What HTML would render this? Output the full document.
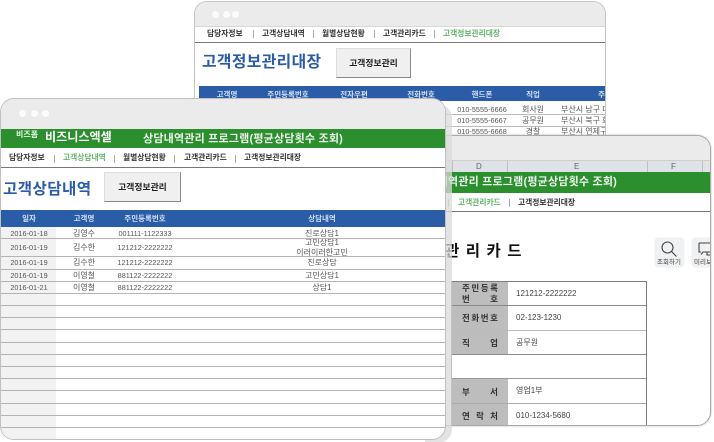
<!DOCTYPE html>
<html lang="ko"><head><meta charset="utf-8"><style>
html,body{margin:0;padding:0;background:#fff}
#p{position:relative;width:714px;height:442px;overflow:hidden;font-family:"Liberation Sans","Noto Sans CJK KR",sans-serif;filter:blur(.3px)}
.a,.t{position:absolute;white-space:nowrap}
.t{transform:translateX(-50%);line-height:12px}
.win{position:absolute;background:#fff;overflow:hidden;box-sizing:border-box;border:1px solid #c4c4c4}
.bar{position:absolute;left:0;right:0;top:0;background:#ebebeb}
.dot{position:absolute;width:7px;height:7px;border-radius:50%;background:#fbfbfb}
.g{background:#2b8f2e}
.n{font-size:7.75px;font-weight:bold;color:#333;line-height:12px}
.s{position:absolute;width:1px;height:8px;background:#aaa}
.lg{color:#62b56a}
.btn{position:absolute;background:#f0f0f0;border-right:1px solid #888;border-bottom:1px solid #888;border-top:1px solid #ddd;border-left:1px solid #ddd;box-sizing:border-box;font-size:8.8px;font-weight:bold;color:#222;text-align:center}
.h{color:#cfe0f5;font-size:7.5px;font-weight:bold}
.d{color:#555;font-size:8px}
.e{font-size:7.3px}
.l{position:absolute;left:0;right:0;height:1px;background:#b4b4b4}
.k{position:absolute;left:0;width:56px;background:#bdbdbd;color:#333;font-size:8.5px;font-weight:bold;box-sizing:border-box;padding:0 10px;display:flex;justify-content:space-between;align-items:center}
.k2{display:block;padding:1px 0 0;line-height:11px}
.k2 div{display:flex;justify-content:space-between;padding:0 10px}
.v{position:absolute;left:64px;color:#444;font-size:8px;line-height:23px}
.m{position:absolute;left:0;right:0;height:1px;background:#8a8a8a}
.c{position:absolute;top:0;width:1px;height:11px;background:#c0c0c0}
</style></head><body><div id="p">

<!-- back window -->
<div class="win" style="left:194px;top:1px;width:412px;height:150px;border-radius:13px 13px 0 0">
 <div class="bar" style="height:24px"></div>
 <div class="dot" style="left:17px;top:9px"></div><div class="dot" style="left:28px;top:9px"></div><div class="dot" style="left:37px;top:9px"></div>
 <div class="a" style="left:0;right:0;top:24px;height:1px;background:#d8d8d8"></div>
 <div class="a" style="left:0;right:0;top:40px;height:1px;background:#777"></div>
 <div class="a n" style="left:12px;top:26px">담당자정보</div><div class="s" style="left:58px;top:28px"></div>
 <div class="a n" style="left:67px;top:26px">고객상담내역</div><div class="s" style="left:118px;top:28px"></div>
 <div class="a n" style="left:127px;top:26px">월별상담현황</div><div class="s" style="left:179px;top:28px"></div>
 <div class="a n" style="left:188px;top:26px">고객관리카드</div><div class="s" style="left:239px;top:28px"></div>
 <div class="a n lg" style="left:248px;top:26px">고객정보관리대장</div>
 <div class="a" style="left:7px;top:50px;font-size:15.8px;font-weight:bold;color:#2b5ca8;line-height:22px;letter-spacing:.4px">고객정보관리대장</div>
 <div class="btn" style="left:141px;top:46px;width:75px;height:30px;line-height:28px">고객정보관리</div>
 <div class="a" style="left:4px;right:0;top:84px;height:15px;background:#2b5ca8"></div>
 <div class="t h" style="left:32px;top:87px">고객명</div><div class="t h" style="left:93px;top:87px">주민등록번호</div>
 <div class="t h" style="left:159px;top:87px">전자우편</div><div class="t h" style="left:226px;top:87px">전화번호</div>
 <div class="t h" style="left:287px;top:87px">핸드폰</div><div class="t h" style="left:338px;top:87px">직업</div><div class="a h" style="left:403px;top:87px;line-height:12px">주</div>
 <div class="a" style="left:4px;right:0;top:112px;height:1px;background:#bbb"></div><div class="a" style="left:4px;right:0;top:124px;height:1px;background:#bbb"></div>
 <div class="t d e" style="left:287px;top:102px">010-5555-6666</div><div class="t d" style="left:338px;top:102px">회사원</div><div class="a d" style="left:366px;top:102px;line-height:12px">부산시 남구 대</div>
 <div class="t d e" style="left:287px;top:113px">010-5555-6667</div><div class="t d" style="left:338px;top:113px">공무원</div><div class="a d" style="left:366px;top:113px;line-height:12px">부산시 북구 화</div>
 <div class="t d e" style="left:287px;top:124px">010-5555-6668</div><div class="t d" style="left:338px;top:124px">경찰</div><div class="a d" style="left:366px;top:124px;line-height:12px">부산시 연제구</div>
</div>

<!-- right window -->
<div class="win" style="left:400px;top:135px;width:311px;height:291px;border-radius:0 14px 14px 0;border-color:#aaa;box-shadow:0 0 2px #bbb">
 <div class="bar" style="height:24px"></div>
 <div class="a" style="left:0;right:0;top:24px;height:12px;background:#dfe2e7;border-top:1px solid #cfcfcf;box-sizing:border-box;color:#666;font-size:8px;line-height:11px">
  <span class="a" style="left:75px">D</span><span class="a" style="left:173px">E</span><span class="a" style="left:270px">F</span>
  <span class="c" style="left:51px"></span><span class="c" style="left:106px"></span><span class="c" style="left:246px"></span><span class="c" style="left:301px"></span>
 </div>
 <div class="a g" style="left:0;right:0;top:36px;height:21px"></div>
 <div class="a" style="left:16px;top:36px;color:#eef6ee;font-size:11px;font-weight:bold;line-height:21px;letter-spacing:.2px">상담내역관리 프로그램(평균상담횟수 조회)</div>
 <div class="a" style="left:0;right:0;top:75px;height:1px;background:#777"></div>
 <div class="s" style="left:47px;top:63px"></div>
 <div class="a n lg" style="left:57px;top:61px">고객관리카드</div><div class="s" style="left:108px;top:63px"></div>
 <div class="a n" style="left:117px;top:61px">고객정보관리대장</div>
 <div class="a" style="left:44px;top:105px;color:#111;font-size:15.5px;font-weight:bold;line-height:22px;letter-spacing:6.5px">관리카드</div>
 <div class="a" style="left:254px;top:102px;width:29px;height:29px;background:#f0f1f2;border-radius:4px;box-shadow:0 0 1px #ccc">
  <svg class="a" style="left:5px;top:2px" width="18" height="18" viewBox="0 0 18 18" fill="none" stroke="#444" stroke-width="1.1"><circle cx="7.5" cy="7.5" r="5.5"/><path d="M11.5 11.5l5 5"/></svg>
  <div class="t" style="left:14px;top:20px;font-size:6.5px;color:#444;line-height:10px">조회하기</div>
 </div>
 <div class="a" style="left:291px;top:102px;width:29px;height:29px;background:#f0f1f2;border-radius:4px;box-shadow:0 0 1px #ccc">
  <svg class="a" style="left:6px;top:4px" width="18" height="14" viewBox="0 0 18 14" fill="none" stroke="#444" stroke-width="1.1"><path d="M1 1h14v9H5l-2 2.5M1 1v9h2M9 10v3h4"/></svg>
  <div class="a" style="left:2px;top:20px;font-size:6.5px;color:#444;line-height:10px">미리보기</div>
 </div>
 <div class="a" style="left:50px;top:145px;width:196px;height:145px;border:1px solid #7d7d7d;box-sizing:border-box;border-bottom:none">
  <div class="k k2" style="top:0;height:24px"><div><span>주</span><span>민</span><span>등</span><span>록</span></div><div><span>번</span><span>호</span></div></div>
  <div class="k" style="top:24px;height:24px"><span>전</span><span>화</span><span>번</span><span>호</span></div>
  <div class="k" style="top:49px;height:24px"><span>직</span><span>업</span></div>
  <div class="k" style="top:97px;height:25px"><span>부</span><span>서</span></div>
  <div class="k" style="top:122px;height:23px"><span>연</span><span>락</span><span>처</span></div>
  <div class="v" style="top:0">121212-2222222</div>
  <div class="v" style="top:24px">02-123-1230</div>
  <div class="v" style="top:49px">공무원</div>
  <div class="v" style="top:97px">영업1부</div>
  <div class="v" style="top:122px">010-1234-5680</div>
  <div class="m" style="top:23px"></div><div class="m" style="top:48px;background:#bbb"></div><div class="m" style="top:72px"></div><div class="m" style="top:96px;background:#999"></div><div class="m" style="top:121px;background:#aaa"></div>
 </div>
</div>

<!-- left window shadow -->
<div class="a" style="left:425px;top:104px;width:27px;height:339px;border-radius:0 14px 14px 0;background:#d9d9d9;opacity:.75"></div>

<!-- left window -->
<div class="win" style="left:0;top:98px;width:446px;height:342px;border-radius:14px;border-color:#c0c0c0">
 <div class="bar" style="height:30px"></div>
 <div class="dot" style="left:18px;top:11px"></div><div class="dot" style="left:30px;top:11px"></div><div class="dot" style="left:41px;top:11px"></div>
 <div class="a g" style="left:0;right:0;top:30px;height:19px"></div>
 <div class="a" style="left:15px;top:28px;color:#e8f4e8;font-size:8px;font-weight:bold;line-height:16px">비즈폼</div>
 <div class="a" style="left:44px;top:29px;color:#fff;font-size:12.1px;font-weight:bold;line-height:19px">비즈니스엑셀</div>
 <div class="a" style="left:142px;top:30px;color:#eef6ee;font-size:11px;font-weight:bold;line-height:20px;letter-spacing:.2px">상담내역관리 프로그램(평균상담횟수 조회)</div>
 <div class="a" style="left:0;right:0;top:68px;height:1px;background:#777"></div>
 <div class="a n" style="left:8px;top:53px">담당자정보</div><div class="s" style="left:53px;top:56px"></div>
 <div class="a n lg" style="left:62px;top:53px">고객상담내역</div><div class="s" style="left:113px;top:56px"></div>
 <div class="a n" style="left:122px;top:53px">월별상담현황</div><div class="s" style="left:173px;top:56px"></div>
 <div class="a n" style="left:183px;top:53px">고객관리카드</div><div class="s" style="left:234px;top:56px"></div>
 <div class="a n" style="left:243px;top:53px">고객정보관리대장</div>
 <div class="a" style="left:2px;top:80px;font-size:15.6px;font-weight:bold;color:#2b5ca8;line-height:22px;letter-spacing:.4px">고객상담내역</div>
 <div class="btn" style="left:103px;top:73px;width:77px;height:30px;line-height:28px">고객정보관리</div>
 <div class="a" style="left:0;top:128px;width:55px;height:213px;background:#f2f2f2"></div>
 <div class="a" style="left:0;right:0;top:111px;height:17px;background:#2b5ca8"></div>
 <div class="t h" style="left:28px;top:114px">일자</div><div class="t h" style="left:83px;top:114px">고객명</div><div class="t h" style="left:144px;top:114px">주민등록번호</div><div class="t h" style="left:321px;top:114px">상담내역</div>

 <div class="t d e" style="left:28px;top:129px">2016-01-18</div><div class="t d" style="left:83px;top:129px">김영수</div><div class="t d e" style="left:144px;top:129px">001111-1122333</div><div class="t d" style="left:321px;top:129px">진로상담1</div>
 <div class="t d e" style="left:28px;top:143px">2016-01-19</div><div class="t d" style="left:83px;top:143px">김수한</div><div class="t d e" style="left:144px;top:143px">121212-2222222</div><div class="t d" style="left:321px;top:139px;line-height:10px;text-align:center">고민상담1<br>이러이러한고민</div>
 <div class="t d e" style="left:28px;top:158px">2016-01-19</div><div class="t d" style="left:83px;top:158px">김수한</div><div class="t d e" style="left:144px;top:158px">121212-2222222</div><div class="t d" style="left:321px;top:158px">진로상담</div>
 <div class="t d e" style="left:28px;top:171px">2016-01-19</div><div class="t d" style="left:83px;top:171px">이영철</div><div class="t d e" style="left:144px;top:171px">881122-2222222</div><div class="t d" style="left:321px;top:171px">고민상담1</div>
 <div class="t d e" style="left:28px;top:183px">2016-01-21</div><div class="t d" style="left:83px;top:183px">이영철</div><div class="t d e" style="left:144px;top:183px">881122-2222222</div><div class="t d" style="left:321px;top:183px">상담1</div>

 <div class="l" style="top:139px"></div><div class="l" style="top:157px"></div><div class="l" style="top:170px"></div><div class="l" style="top:182px"></div><div class="l" style="top:194px"></div><div class="l" style="top:206px"></div><div class="l" style="top:218px"></div><div class="l" style="top:230px"></div><div class="l" style="top:243px"></div><div class="l" style="top:255px"></div><div class="l" style="top:267px"></div><div class="l" style="top:279px"></div><div class="l" style="top:291px"></div><div class="l" style="top:304px"></div><div class="l" style="top:316px"></div><div class="l" style="top:328px"></div>
</div>
</div></body></html>
